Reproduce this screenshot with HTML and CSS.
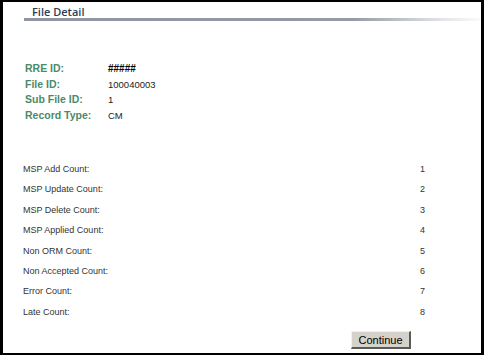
FILE: index.html
```html
<html>

<head>
  <title>File Detail</title>
  <link rel="stylesheet" href="styles.css">
</head>

<body>

  <div class="frame">
    <header>
      <h1>File Detail</h1>
    </header>

    <dl class="details">
      <dt>RRE ID:</dt>
      <dd class="masked">#####</dd>
      <dt>File ID:</dt>
      <dd>100040003</dd>
      <dt>Sub File ID:</dt>
      <dd>1</dd>
      <dt>Record Type:</dt>
      <dd>CM</dd>
    </dl>

    <dl class="counts">
      <dt>MSP Add Count:</dt>
      <dd>1</dd>
      <dt>MSP Update Count:</dt>
      <dd>2</dd>
      <dt>MSP Delete Count:</dt>
      <dd>3</dd>
      <dt>MSP Applied Count:</dt>
      <dd>4</dd>
      <dt>Non ORM Count:</dt>
      <dd>5</dd>
      <dt>Non Accepted Count:</dt>
      <dd>6</dd>
      <dt>Error Count:</dt>
      <dd>7</dd>
      <dt>Late Count:</dt>
      <dd>8</dd>
    </dl>

    <div class="actions">
      <button type="button">Continue</button>
    </div>
  </div>

</body>

</html>
```

FILE: styles.css
```css
body {
  margin: 0;
  background-color: #fff;
  font-family: "Liberation Sans", Arial, sans-serif;
}

.frame {
  width: 484px;
  height: 355px;
  box-sizing: border-box;
  border-style: solid;
  border-color: #000;
  border-width: 2px 3px 2px 3px;
  overflow: hidden;
}

header {
  margin-left: 21px;
  padding: 3px 0 3px 8px;
  background: linear-gradient(to right, #8f96a1 0%, #959ba5 72%, #e4e6e9 92%, #fafafa 100%) left bottom / 100% 3px no-repeat;
}

h1 {
  margin: 0;
  font-family: "Open Sans", sans-serif;
  font-weight: 600;
  font-size: 11px;
  line-height: 13px;
  color: #2c3d57;
}

dl {
  margin: 0;
  display: grid;
}

dd {
  margin: 0;
}

.details {
  margin-top: 40px;
  padding-left: 22px;
  grid-template-columns: 83px auto;
  line-height: 15.7px;
}

.details dt {
  font-weight: bold;
  font-size: 10.5px;
  color: #4b8a68;
}

.details dd {
  font-size: 9.5px;
  color: #222;
}

.details .masked {
  font-weight: bold;
  font-size: 10px;
  color: #000;
}

.counts {
  margin-top: 35px;
  padding-left: 20px;
  grid-template-columns: 397px auto;
  line-height: 20.43px;
  font-size: 9px;
  color: #333;
}

.actions {
  display: flex;
  justify-content: flex-end;
  padding-right: 70px;
  margin-top: 9px;
}

button {
  width: 60px;
  height: 18px;
  padding: 0;
  background-color: #d5d2cb;
  border-style: solid;
  border-width: 1px 2px 2px 1px;
  border-color: #f2f1ee #5a5a5a #5a5a5a #f2f1ee;
  font-family: "Liberation Sans", Arial, sans-serif;
  font-size: 11px;
  color: #000;
}
```
